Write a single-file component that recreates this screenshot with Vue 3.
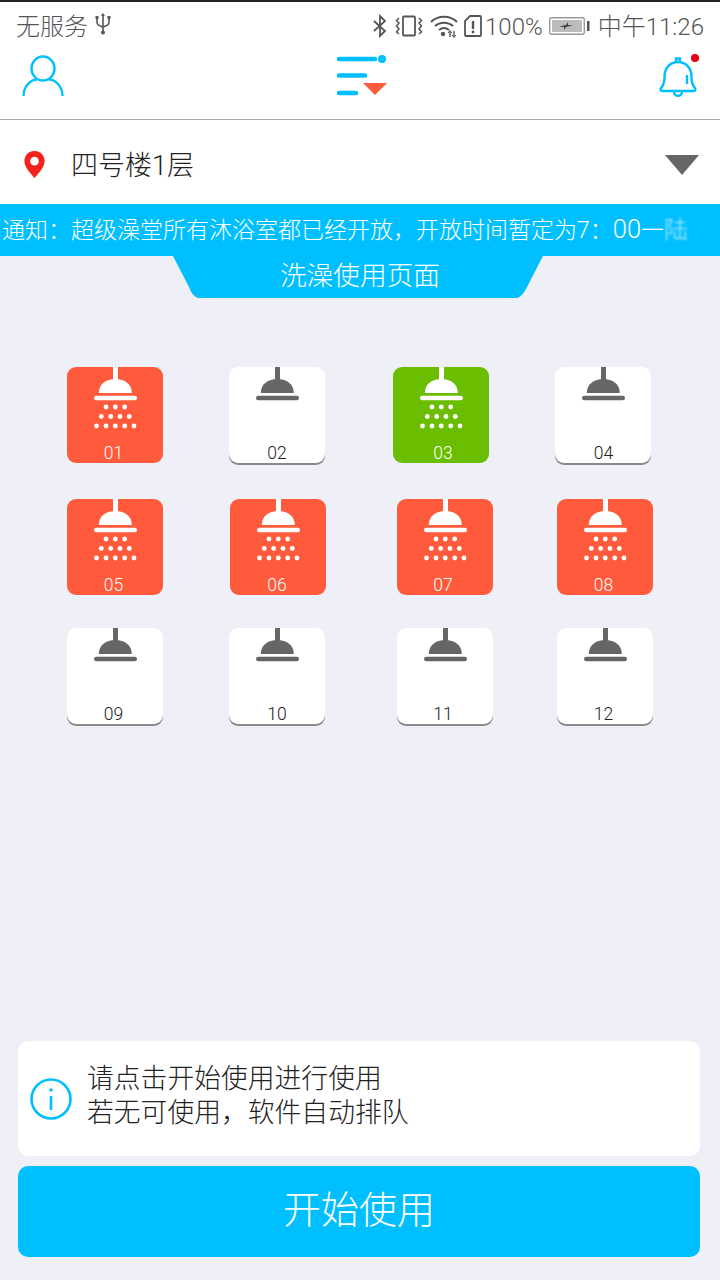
<template>
  <div class="page">
    <header class="top">
      <div class="status">
        <div class="status-left">
          <span>无服务</span>
          <svg class="usb" width="16" height="24" viewBox="0 0 16 24" fill="none" stroke="#555" stroke-width="1.6">
            <path d="M8 2v20M2 6v4c0 3 2 3.500 6 5 4-1.500 6-2 6-5V6" />
            <path d="M8 1l-2 3h4z" fill="#555" stroke="none" />
            <rect x="0.500" y="4" width="3" height="3" fill="#555" stroke="none" />
            <rect x="12.500" y="4" width="3" height="3" fill="#555" stroke="none" />
            <circle cx="8" cy="20.500" r="2" fill="#555" stroke="none" />
          </svg>
        </div>
        <div class="status-right">
          <svg width="16" height="24" viewBox="0 0 16 24" fill="none" stroke="#555" stroke-width="1.800">
            <path d="M2 7l11 10-5 5V2l5 5L2 17" />
          </svg>
          <svg class="vibrate" width="30" height="24" viewBox="0 0 30 24" fill="none" stroke="#555" stroke-width="1.800">
            <rect x="9" y="2.500" width="12" height="19" rx="1" />
            <path d="M5 4l-2.500 2.500L5 9l-2.500 3L5 15l-2.500 3L5 20M25 4l2.500 2.500L25 9l2.500 3L25 15l2.500 3L25 20" stroke-width="1.500" />
          </svg>
          <svg class="wifi" width="28" height="24" viewBox="0 0 28 24" fill="none" stroke="#555" stroke-width="2">
            <path d="M1 8c7-7 19-7 26 0M5 12c5-4.500 13-4.500 18 0M9 16c3-2.500 7-2.500 10 0" />
            <circle cx="13" cy="20" r="2.200" fill="#555" stroke="none" />
            <path d="M20 17v6M24 17v6" stroke-width="1.400" />
            <path d="M18 19l2-2.500 2 2.500M22 21l2 2.500 2-2.500" stroke-width="1" />
          </svg>
          <svg class="sim" width="18" height="24" viewBox="0 0 18 24" fill="none" stroke="#555" stroke-width="1.800">
            <path d="M6 2h10a1 1 0 0 1 1 1v18a1 1 0 0 1-1 1H2a1 1 0 0 1-1-1V7z" />
            <path d="M9 7v8" stroke-width="2.400" />
            <circle cx="9" cy="18" r="1.400" fill="#555" stroke="none" />
          </svg>
          <span class="pct">100%</span>
          <svg class="battery" width="41" height="22" viewBox="0 0 41 22">
            <rect x="0.700" y="2.700" width="34.600" height="16.600" rx="2" fill="#fff" stroke="#999" stroke-width="1.400" />
            <rect x="3" y="5" width="30" height="12" fill="#bcbcbc" />
            <path d="M10 11.500l7-1.500 2-3 0 3 5 .500-7 1.500-2 3 0-3z" fill="#444" />
            <rect x="38" y="6" width="2.500" height="10" fill="#555" />
          </svg>
          <span class="clock">中午11:26</span>
        </div>
      </div>

      <nav class="nav">
        <svg width="42" height="42" viewBox="0 0 42 42" fill="none" stroke="#00bfff" stroke-width="2.400">
          <ellipse cx="21" cy="13.500" rx="11.500" ry="12" />
          <path d="M1.500 41C1.500 31 9 24.500 15 24.500M40.500 41C40.500 31 33 24.500 27 24.500" />
        </svg>
        <svg class="menu" width="52" height="44" viewBox="0 0 52 44">
          <g stroke="#00bfff" stroke-width="4.500" stroke-linecap="round">
            <path d="M3 6h36M3 22.500h26M3 40h17" />
          </g>
          <circle cx="46" cy="6" r="4" fill="#00bfff" />
          <path d="M27 30h24L39 42z" fill="#ff5a3c" />
        </svg>
        <svg class="bell" width="42" height="44" viewBox="0 0 42 44" fill="none" stroke="#00bfff" stroke-width="2.400">
          <path d="M3 35c3-3 3.500-6 3.500-11 0-9 5.500-15 13.500-15s13.500 6 13.500 15c0 5 .5 8 3.500 11 1 1.500 0 3-1.500 3h-31C2.500 38 2 36.500 3 35z" stroke-linejoin="round" />
          <path d="M18 8V5.500h4V8M16 39c0 5 8 5 8 0" />
          <path d="M29 22v9" />
          <circle cx="37" cy="5" r="4" fill="#e60012" stroke="none" />
        </svg>
      </nav>
    </header>

    <div class="location">
      <svg class="pin" width="23" height="29" viewBox="0 0 24 30">
        <path d="M12 1C5.500 1 1.500 6 1.500 11.500 1.500 18 8 24 12 29c4-5 10.500-11 10.500-17.500C22.500 6 18.500 1 12 1z" fill="#f5211a" />
        <circle cx="12" cy="11.500" r="4.500" fill="#fff" />
      </svg>
      <span class="loc-name">四号楼1层</span>
      <span class="loc-arrow"></span>
    </div>

    <div class="notice">
      <span>通知：超级澡堂所有沐浴室都已经开放，开放时间暂定为7：</span><span class="notice-num">00</span><span>一</span><span class="notice-fade">陆</span>
    </div>

    <div class="tab">
      <svg class="tab-bg" width="370" height="42" viewBox="0 0 370 42">
        <path d="M0 0H370L354 31Q350 40 344 42H25Q19 40 16 31Z" fill="#00bfff" />
      </svg>
      <span class="tab-label">洗澡使用页面</span>
    </div>

    <main class="stalls">
      <div v-for="row in rows" :key="row.name" class="stall-row" :class="row.name">
        <div v-for="s in row.items" :key="s.no" class="stall" :class="s.state">
          <svg width="96" height="70" viewBox="0 0 96 70">
            <g :fill="s.state === 'idle' ? '#666' : '#fff'">
              <rect x="46" y="0" width="5" height="14" />
              <path d="M31.800 26C31.800 17 39 12 48.300 12S64.800 17 64.800 26z" />
              <rect x="27" y="28.700" width="43" height="4.600" rx="2.300" />
              <template v-if="s.state !== 'idle'">
                <circle v-for="d in dots" :key="d[0] + '-' + d[1]" :cx="d[0]" :cy="d[1]" r="2.400" />
              </template>
            </g>
          </svg>
          <span class="stall-no" :style="{ marginLeft: s.shift + 'px' }">{{ s.no }}</span>
        </div>
      </div>
    </main>

    <section class="hint">
      <svg width="42" height="42" viewBox="0 0 42 42" fill="none" stroke="#00bfff" stroke-width="2.600">
        <circle cx="21" cy="21" r="19.500" />
        <path d="M21 18v14" />
        <circle cx="21" cy="12" r="1.800" fill="#00bfff" stroke="none" />
      </svg>
      <p class="hint-text">请点击开始使用进行使用<br />若无可使用，软件自动排队</p>
    </section>

    <button class="start">开始使用</button>
  </div>
</template>

<script setup>
const states = {
  '01': 'busy', '05': 'busy', '06': 'busy', '07': 'busy', '08': 'busy',
  '03': 'free'
}

// numbers sit on a fixed column, the cards don't quite
const labelX = [113.500, 277, 443, 603.500]

const makeRow = (name, nos, cardX) => ({
  name,
  items: nos.map((no, i) => ({
    no,
    state: states[no] || 'idle',
    shift: (labelX[i] - (cardX[i] + 48)) * 2
  }))
})

const rows = [
  makeRow('row-a', ['01', '02', '03', '04'], [67, 229, 393, 555]),
  makeRow('row-b', ['05', '06', '07', '08'], [67, 230, 397, 557]),
  makeRow('row-c', ['09', '10', '11', '12'], [67, 229, 397, 557])
]

const dots = [
  [39, 40], [48.3, 40], [57.700, 40],
  [34.300, 49.500], [43.700, 49.500], [53, 49.500], [62.300, 49.500],
  [29.500, 59], [39, 59], [48.300, 59], [57.700, 59], [67, 59]
]
</script>

<style>
body {
  margin: 0;
  background: #eff0f7;
}
</style>

<style scoped>
.page {
  width: 720px;
  height: 1280px;
  display: flex;
  flex-direction: column;
  background: #eff0f7;
  font-family: Roboto, "Noto Sans CJK SC", sans-serif;
  overflow: hidden;
}

.top {
  background: #fff;
  border-top: 2px solid #222;
  border-bottom: 1px solid #aaa;
  height: 117px;
}

.status {
  display: flex;
  justify-content: space-between;
  align-items: center;
  padding: 0 16px;
  height: 46px;
  color: #555;
  font-size: 24px;
  font-weight: 300;
}

.status-left {
  display: flex;
  align-items: center;
  gap: 7px;
  margin-top: -2px;
}

.status-right {
  display: flex;
  align-items: center;
}

.status-right svg {
  margin-top: 2px;
}

.status-right .vibrate,
.status-right .wifi,
.status-right .sim {
  margin-left: 6px;
}

.pct {
  margin-left: 3px;
  margin-right: 6px;
  margin-top: 3px;
}

.clock {
  margin-left: 8px;
  margin-top: -2px;
}

.nav {
  display: flex;
  justify-content: space-between;
  align-items: flex-start;
  padding: 7px 20px 0 22px;
}

.nav .menu {
  margin-top: -2px;
  margin-left: 2px;
}

.nav .bell {
  margin-top: -2px;
}

.location {
  height: 84px;
  background: #fff;
  display: flex;
  align-items: center;
  padding: 0 21px 0 23px;
  box-sizing: border-box;
}

.pin {
  margin-top: 5px;
}

.loc-name {
  margin-left: 25px;
  margin-top: 2px;
  font-size: 27px;
  font-weight: 300;
  color: #222;
}

.loc-arrow {
  margin-left: auto;
  margin-top: 6px;
  width: 0;
  height: 0;
  border-left: 17px solid transparent;
  border-right: 17px solid transparent;
  border-top: 20px solid #666;
}

.notice {
  height: 52px;
  background: #00bfff;
  color: #fff;
  font-size: 23px;
  font-weight: 300;
  line-height: 50px;
  padding-left: 2px;
  white-space: nowrap;
  overflow: hidden;
}

.notice-num {
  font-size: 25.500px;
}

.notice-fade {
  font-size: 24px;
  opacity: 0.75;
  filter: blur(1px);
}

.tab {
  position: relative;
  align-self: center;
  width: 370px;
  height: 42px;
  margin-left: -4px;
  display: flex;
  justify-content: center;
}

.tab-bg {
  position: absolute;
  left: 0;
  top: 0;
}

.tab-label {
  position: relative;
  margin-left: 4px;
  color: #fff;
  font-size: 26.700px;
  font-weight: 300;
  line-height: 40px;
}

.stalls {
  padding: 69px 0 0 67px;
}

.stall-row {
  display: grid;
  margin-bottom: 36px;
}

.stall-row.row-a {
  grid-template-columns: 162px 164px 162px 96px;
}

.stall-row.row-b {
  grid-template-columns: 163px 167px 160px 96px;
  margin-bottom: 33px;
}

.stall-row.row-c {
  grid-template-columns: 162px 168px 160px 96px;
}

.stall {
  width: 96px;
  height: 96px;
  border-radius: 9px;
  display: flex;
  flex-direction: column;
  align-items: center;
  background: #fff;
  color: #222;
  overflow: hidden;
}

.stall.idle {
  box-shadow: 0 2px 0 #8a8a8a;
}

.stall.busy {
  background: #ff5a3c;
  color: #fff;
}

.stall.free {
  background: #6abd00;
  color: #fff;
}

.stall-no {
  margin-top: 6px;
  font-size: 17.500px;
  font-weight: 300;
  line-height: 20px;
}

.hint {
  margin: auto 20px 10px 18px;
  height: 115px;
  background: #fff;
  border-radius: 10px;
  display: flex;
  align-items: center;
  padding-left: 12px;
}

.hint-text {
  margin: -5px 0 0 15px;
  font-size: 26.800px;
  line-height: 34px;
  color: #222;
  font-weight: 300;
}

.start {
  margin: 0 20px 23px 18px;
  height: 91px;
  padding: 0 0 10px;
  border: none;
  border-radius: 10px;
  background: #00bfff;
  color: #fff;
  font-family: inherit;
  font-size: 38px;
  font-weight: 300;
}
</style>
